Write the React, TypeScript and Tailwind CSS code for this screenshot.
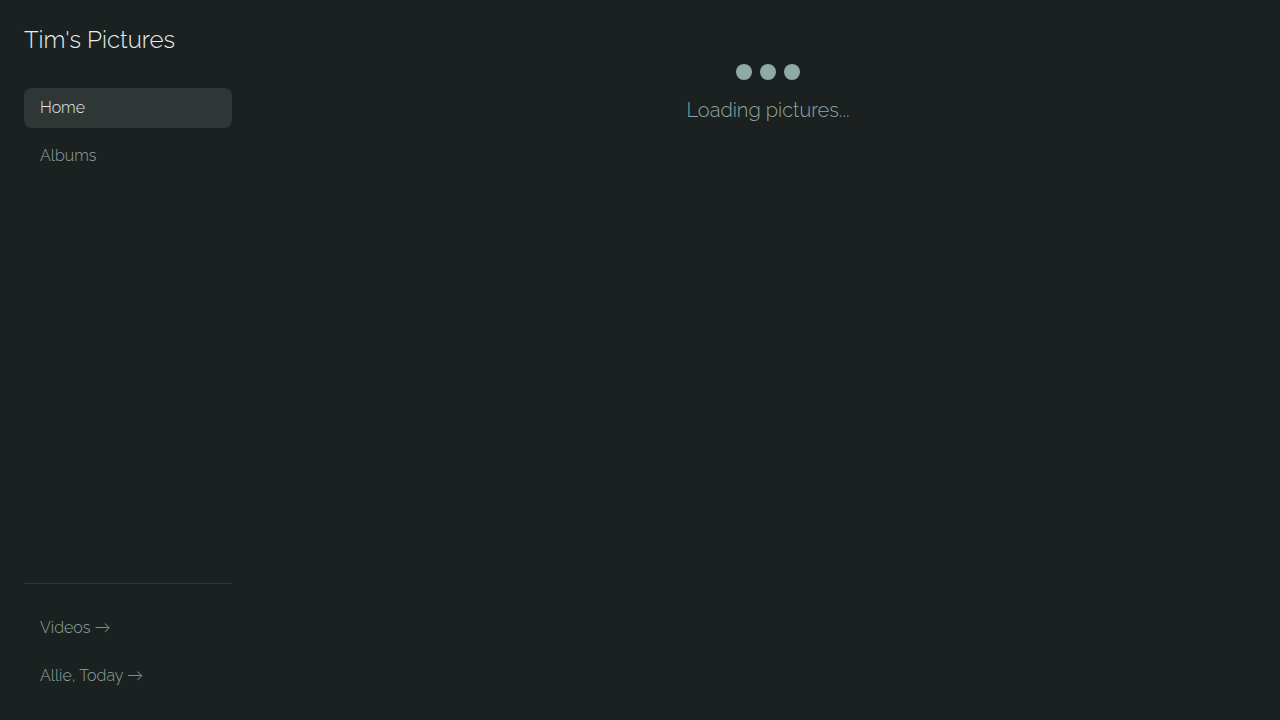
export default function App() {
  return (
    <div className="flex h-screen w-full bg-[#1b2121] font-['Raleway','Lato','Open_Sans',sans-serif] font-light">
      <aside className="flex w-64 shrink-0 flex-col p-6">
        <h1 className="text-2xl leading-8 text-[#e8eeec]">Tim's Pictures</h1>
        <nav className="mt-8 flex flex-col gap-2">
          <a className="flex h-10 items-center rounded-lg bg-[#2f3636] px-4 text-[#e3e9e7]">Home</a>
          <a className="flex h-10 items-center rounded-lg px-4 text-[#8ea5a0]">Albums</a>
        </nav>
        <div className="mt-auto border-t border-[#2e3535] pt-6 flex flex-col gap-2">
          <a className="flex h-10 items-center px-4 text-[#8ea5a0]">Videos →</a>
          <a className="flex h-10 items-center px-4 text-[#8ea5a0]">Allie, Today →</a>
        </div>
      </aside>
      <main className="flex flex-1 flex-col items-center pt-16">
        <div className="flex gap-2">
          <span className="h-4 w-4 rounded-full bg-[#8fa9a3]" />
          <span className="h-4 w-4 rounded-full bg-[#8fa9a3]" />
          <span className="h-4 w-4 rounded-full bg-[#8fa9a3]" />
        </div>
        <p className="mt-4 text-xl text-[#8ea5a0]">Loading pictures...</p>
      </main>
    </div>
  )
}
